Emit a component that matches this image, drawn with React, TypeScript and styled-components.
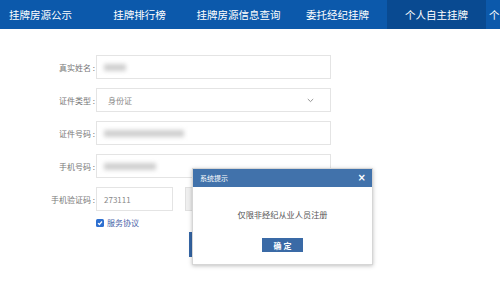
import React from "react";
import styled, { createGlobalStyle } from "styled-components";

const Global = createGlobalStyle`
  html, body { margin: 0; padding: 0; background: #fff; }
  body { font-family: "Noto Sans CJK SC", "Noto Sans", sans-serif; }
  * { box-sizing: border-box; }
`;

const Page = styled.div`
  position: relative;
  width: 500px;
  height: 288px;
  overflow: hidden;
  background: #fff;
`;

const NavBar = styled.nav`
  height: 29px;
  background: #0c59ab;
  overflow: hidden;
`;

const NavList = styled.div`
  display: flex;
  height: 100%;
  margin-left: -9px;
`;

const NavItem = styled.div<{ $active?: boolean; $start?: boolean }>`
  flex: 0 0 99px;
  height: 100%;
  display: flex;
  align-items: center;
  justify-content: ${(p) => (p.$start ? "flex-start" : "center")};
  padding-left: ${(p) => (p.$start ? "3px" : "0")};
  padding-bottom: 1px;
  background: ${(p) => (p.$active ? "#094a91" : "transparent")};
  color: #fff;
  font-size: 10.5px;
  white-space: nowrap;
  overflow: hidden;
`;

const Form = styled.div`
  display: flex;
  flex-direction: column;
  gap: 9px;
  padding-top: 26px;
`;

const Row = styled.div`
  display: flex;
  align-items: center;
  height: 24px;
`;

const Label = styled.div`
  width: 96px;
  text-align: right;
  padding-right: 1px;
  font-size: 8px;
  color: #777;
  white-space: nowrap;
`;

const Input = styled.div<{ $w?: number }>`
  width: ${(p) => p.$w ?? 235}px;
  height: 24px;
  border: 1px solid #e4e4e4;
  display: flex;
  align-items: center;
  justify-content: space-between;
  padding: 0 0 0 7px;
  font-size: 8px;
  color: #777;
`;

const Blurred = styled.span<{ $w: number }>`
  display: inline-block;
  width: ${(p) => p.$w}px;
  height: 7px;
  background: #cfcfcf;
  filter: blur(2px);
`;

const Value = styled.span<{ $indent?: number }>`
  padding-left: ${(p) => p.$indent ?? 0}px;
  color: #888;
`;

const Chevron = styled.svg`
  margin-right: 16px;
`;

const CodeButton = styled.div`
  margin-left: 12px;
  width: 90px;
  height: 24px;
  background: #efefef;
  border: 1px solid #e0e0e0;
`;

const CheckRow = styled.div`
  display: flex;
  align-items: center;
  gap: 3px;
  margin-top: -2px;
  padding-left: 96px;
  height: 9px;
  font-size: 8px;
  color: #4a64a8;
`;

const Box = styled.span`
  width: 8px;
  height: 8px;
  border-radius: 1.5px;
  background: #2d6fd0;
  display: flex;
  align-items: center;
  justify-content: center;
`;

const SubmitRow = styled.div`
  padding-left: 189px;
  margin-top: -4px;
`;

const Submit = styled.div`
  width: 110px;
  height: 25px;
  background: #3566a6;
`;

const Modal = styled.div`
  position: absolute;
  left: 192px;
  top: 168px;
  width: 181px;
  height: 97px;
  background: #fff;
  border: 1px solid #d6d6d6;
  box-shadow: 0 1px 4px rgba(0, 0, 0, 0.25);
  display: flex;
  flex-direction: column;
`;

const ModalHeader = styled.div`
  height: 18px;
  background: #4172ab;
  color: #fff;
  display: flex;
  align-items: center;
  justify-content: space-between;
  padding: 0 6px 0 7px;
  font-size: 7px;
`;

const Close = styled.span`
  font-size: 10px;
  font-weight: bold;
  line-height: 1;
  font-family: "DejaVu Sans", sans-serif;
`;

const ModalBody = styled.div`
  flex: 1;
  display: flex;
  flex-direction: column;
  align-items: center;
  padding-top: 21px;
  font-size: 8.2px;
  color: #555;
`;

const OkButton = styled.div`
  margin-top: 18px;
  width: 41px;
  height: 14px;
  background: #3a6aa6;
  color: #fff;
  font-size: 8px;
  font-weight: bold;
  letter-spacing: 2px;
  padding-left: 2px;
  display: flex;
  align-items: center;
  justify-content: center;
`;

const navItems = [
  "挂牌房源公示",
  "挂牌排行榜",
  "挂牌房源信息查询",
  "委托经纪挂牌",
  "个人自主挂牌",
];

export default function App() {
  return (
    <Page>
      <Global />
      <NavBar>
        <NavList>
          {navItems.map((t, i) => (
            <NavItem key={t} $active={i === 4}>
              {t}
            </NavItem>
          ))}
          <NavItem $start>个人中心</NavItem>
        </NavList>
      </NavBar>
      <Form>
        <Row>
          <Label>真实姓名 :</Label>
          <Input>
            <Blurred $w={22} />
          </Input>
        </Row>
        <Row>
          <Label>证件类型 :</Label>
          <Input>
            <Value $indent={4}>身份证</Value>
            <Chevron width="7" height="5" viewBox="0 0 7 5">
              <path d="M0.8 1 L3.5 3.6 L6.2 1" fill="none" stroke="#888" strokeWidth="0.9" />
            </Chevron>
          </Input>
        </Row>
        <Row>
          <Label>证件号码 :</Label>
          <Input>
            <Blurred $w={80} />
          </Input>
        </Row>
        <Row>
          <Label>手机号码 :</Label>
          <Input>
            <Blurred $w={52} />
          </Input>
        </Row>
        <Row>
          <Label>手机验证码 :</Label>
          <Input $w={77}>
            <Value>273111</Value>
          </Input>
          <CodeButton />
        </Row>
        <CheckRow>
          <Box>
            <svg width="6" height="6" viewBox="0 0 6 6">
              <path d="M1 3.1 L2.4 4.5 L5 1.5" fill="none" stroke="#fff" strokeWidth="1.2" />
            </svg>
          </Box>
          服务协议
        </CheckRow>
        <SubmitRow>
          <Submit />
        </SubmitRow>
      </Form>
      <Modal>
        <ModalHeader>
          <span>系统提示</span>
          <Close>×</Close>
        </ModalHeader>
        <ModalBody>
          仅限非经纪从业人员注册
          <OkButton>确定</OkButton>
        </ModalBody>
      </Modal>
    </Page>
  );
}
